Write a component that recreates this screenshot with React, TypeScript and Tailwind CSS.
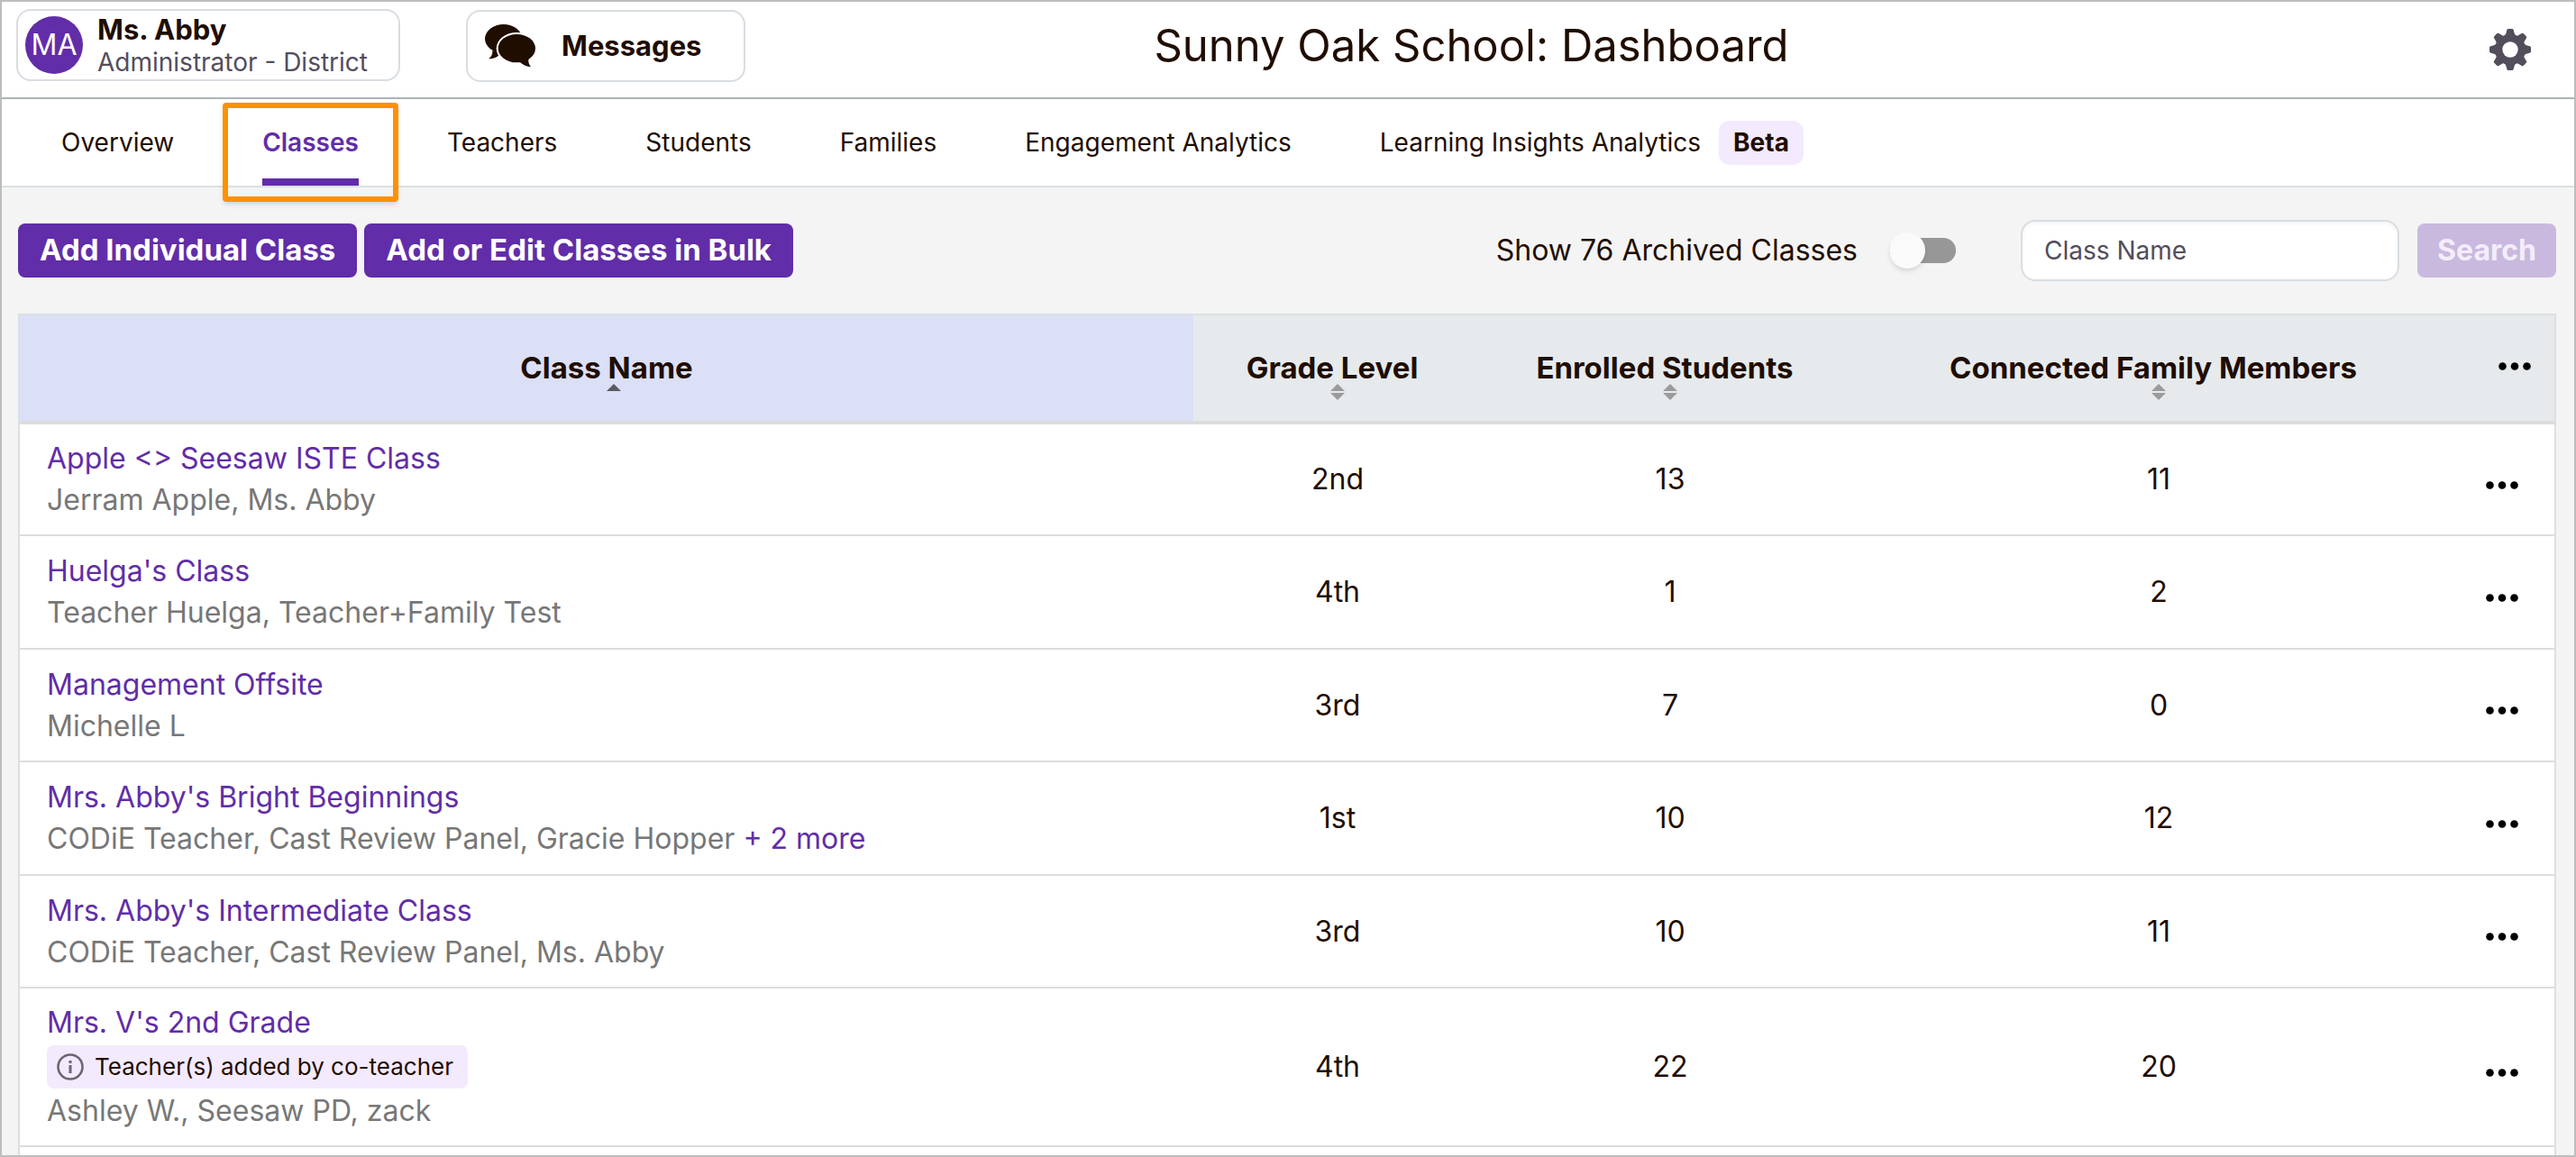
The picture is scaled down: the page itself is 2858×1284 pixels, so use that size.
import React, {useState} from "react";

type ClassRow = {
    name: string;
    teachers: string;
    more?: string;
    notice?: string;
    grade: string;
    students: number;
    family: number;
};

const TABS = ["Overview", "Classes", "Teachers", "Students", "Families", "Engagement Analytics"];

const CLASSES: ClassRow[] = [
    {name: "Apple <> Seesaw ISTE Class", teachers: "Jerram Apple, Ms. Abby", grade: "2nd", students: 13, family: 11},
    {name: "Huelga's Class", teachers: "Teacher Huelga, Teacher+Family Test", grade: "4th", students: 1, family: 2},
    {name: "Management Offsite", teachers: "Michelle L", grade: "3rd", students: 7, family: 0},
    {
        name: "Mrs. Abby's Bright Beginnings",
        teachers: "CODiE Teacher, Cast Review Panel, Gracie Hopper",
        more: "+ 2 more",
        grade: "1st",
        students: 10,
        family: 12,
    },
    {
        name: "Mrs. Abby's Intermediate Class",
        teachers: "CODiE Teacher, Cast Review Panel, Ms. Abby",
        grade: "3rd",
        students: 10,
        family: 11,
    },
    {
        name: "Mrs. V's 2nd Grade",
        teachers: "Ashley W., Seesaw PD, zack",
        notice: "Teacher(s) added by co-teacher",
        grade: "4th",
        students: 22,
        family: 20,
    },
];

const ChatIcon = () => (
    <svg viewBox="54 91 171 144" className="w-[57px] h-12" aria-hidden="true">
        <g fill="#1f0d00">
            <ellipse cx="116" cy="139" rx="62" ry="48"/>
            <path d="M79 178 C80 190 76 199 67 205 C80 207 92 203 100 194 L108 184 Z"/>
        </g>
        <ellipse cx="160" cy="171" rx="68" ry="53" fill="#fff"/>
        <g fill="#1f0d00">
            <ellipse cx="160" cy="171" rx="62" ry="47"/>
            <path d="M170 216 C181 226 193 232 207 233 C200 225 197 215 200 203 Z"/>
        </g>
    </svg>
);

const GearIcon = () => (
    <svg viewBox="0 0 138 138" className="w-[46px] h-[46px]" aria-hidden="true">
        <g fill="#534d5c">
            <circle cx="69" cy="69" r="50"/>
            {[0, 45, 90, 135, 180, 225, 270, 315].map((angle) => (
                <path
                    key={angle}
                    transform={`rotate(${angle} 69 69)`}
                    d="M62 0 H76 Q79 0 80 4 L83 15 Q84 21 92 25 L69 40 L46 25 Q54 21 55 15 L58 4 Q59 0 62 0 Z"
                />
            ))}
        </g>
        <circle cx="69" cy="69" r="26" fill="#fff"/>
    </svg>
);

const InfoIcon = () => (
    <svg viewBox="0 0 30 30" className="w-[30px] h-[30px]" fill="none" stroke="#6b6670" aria-hidden="true">
        <circle cx="15" cy="15" r="13.5" strokeWidth="2.6"/>
        <path d="M15 13 V22 M15 8 V11" strokeWidth="3"/>
    </svg>
);

const Dots = () => (
    <svg viewBox="0 0 36 9" className="w-9 h-[9px]" aria-hidden="true">
        <circle cx="4.5" cy="4.5" r="4.3"/>
        <circle cx="18" cy="4.5" r="4.3"/>
        <circle cx="31.5" cy="4.5" r="4.3"/>
    </svg>
);

const SortIcon = ({active = false}: { active?: boolean }) => (
    <svg viewBox="0 0 16 18" className="w-4 h-[18px]" aria-hidden="true">
        <path d="M8 0 L16 8 H0 Z" fill={active ? "#5a5a62" : "#9b9b9b"}/>
        {!active && <path d="M0 10 H16 L8 18 Z" fill="#9b9b9b"/>}
    </svg>
);

const SortHeader = ({label}: { label: string }) => (
    <th className="p-0 pt-4 font-bold" scope="col">
        <button className="w-full flex flex-col items-center font-bold">
            <span className="leading-9 pr-3">{label}</span>
            <SortIcon/>
        </button>
    </th>
);

const Header = () => (
    <header className="h-[108px] shrink-0 bg-white border-b-2 border-[#abb4b1] flex items-start pl-4 pr-12 pt-2">
        <button
            className="w-[426px] h-20 border-2 border-[#d8dde3] rounded-2xl flex items-center gap-4 pl-2 text-left">
            <span
                className="w-16 h-16 rounded-full bg-[#612da8] text-white text-[32px] flex items-center justify-center">
                MA
            </span>
            <span className="flex flex-col pt-0.5">
                <span className="text-[31px] leading-9 font-bold">Ms. Abby</span>
                <span className="text-[28px] leading-9 text-[#534d5c]">Administrator - District</span>
            </span>
        </button>
        <button
            className="w-[310px] h-20 mt-px ml-[73px] border-2 border-[#d8dde3] rounded-2xl flex items-center gap-7 pl-[19px] text-[31px] font-bold">
            <ChatIcon/>
            Messages
        </button>
        <h1 className="flex-1 text-center text-[49px] leading-[82px]">Sunny Oak School: Dashboard</h1>
        <div className="w-[370px] pt-[22px] flex justify-end">
            <button aria-label="Settings">
                <GearIcon/>
            </button>
        </div>
    </header>
);

const Nav = () => (
    <nav className="h-[98px] shrink-0 bg-white border-b-2 border-[#dae0e5] flex gap-[98px] pl-[66px] text-[28px]">
        {TABS.map((tab) => (
            <a
                key={tab}
                href="#"
                className={tab === "Classes"
                    ? "relative leading-[96px] font-semibold text-[#612da8] border-b-8 border-[#612da8] h-24"
                    : "leading-[96px]"}
            >
                {tab}
                {tab === "Classes" && (
                    <span
                        className="absolute -left-11 -right-11 top-1 h-[110px] border-[6px] border-[#ff9100] rounded-sm shadow-md"/>
                )}
            </a>
        ))}
        <a href="#" className="flex items-center gap-5 leading-[96px]">
            Learning Insights Analytics
            <span className="bg-[#f3eafe] rounded-xl px-4 h-[49px] leading-[49px] font-bold">Beta</span>
        </a>
    </nav>
);

const Toolbar = () => {
    const [archived, setArchived] = useState(false);

    return (
        <div className="flex items-center pt-9 pb-9 text-[32px]">
            <button className="h-[60px] px-6 rounded-lg bg-[#612da8] text-white text-[33px] font-bold">
                Add Individual Class
            </button>
            <button className="h-[60px] px-6 ml-2 rounded-lg bg-[#612da8] text-white text-[33px] font-bold">
                Add or Edit Classes in Bulk
            </button>
            <label className="ml-auto flex items-center gap-[35px]">
                Show 76 Archived Classes
                <input
                    type="checkbox"
                    checked={archived}
                    onChange={() => setArchived(!archived)}
                    className="appearance-none w-[74px] h-7 rounded-full bg-[#979797] flex items-center before:w-10 before:h-10 before:rounded-full before:bg-[#fafafa] before:shadow-md checked:justify-end"
                />
            </label>
            <input
                type="text"
                aria-label="Class Name"
                placeholder="Class Name"
                className="w-[420px] h-[68px] ml-[72px] px-6 bg-white border-2 border-[#d8dde3] rounded-2xl text-[28px] placeholder:text-[#534d5c] inset-shadow-sm"
            />
            <button className="h-[60px] w-[154px] ml-5 rounded-lg bg-[#c9b9df] text-[#f3edfa] font-bold">
                Search
            </button>
        </div>
    );
};

const ClassTable = () => (
    <div className="flex-1 bg-white border-2 border-b-0 border-[#dae0e5]">
        <table className="w-full table-fixed text-[32px]">
            <colgroup>
                <col/>
                <col className="w-80"/>
                <col className="w-[418px]"/>
                <col className="w-[666px]"/>
                <col className="w-[106px]"/>
            </colgroup>
            <thead className="text-[33px]">
                <tr className="h-[119px] bg-[#e6eaed] border-b-4 border-[#dddddd]">
                    <th className="p-0 pt-4 font-bold bg-[#dbe0f6]" scope="col" aria-sort="ascending">
                        <button className="w-full flex flex-col items-center font-bold">
                            <span className="leading-9">Class Name</span>
                            <span className="pl-4 flex"><SortIcon active/></span>
                        </button>
                    </th>
                    <SortHeader label="Grade Level"/>
                    <SortHeader label="Enrolled Students"/>
                    <SortHeader label="Connected Family Members"/>
                    <th className="p-0 pb-1">
                        <button aria-label="Table options" className="w-full h-9 flex items-center justify-end pr-[26px]">
                            <Dots/>
                        </button>
                    </th>
                </tr>
            </thead>
            <tbody>
                {CLASSES.map((row) => (
                    <tr key={row.name} className="h-[125px] even:h-[126px] border-b-2 border-[#dddddd] text-center">
                        <td className="py-[15px] pl-[30px] text-left leading-[46px]">
                            <a href="#" className="block text-[#612da8]">{row.name}</a>
                            {row.notice && (
                                <div
                                    className="w-fit h-12 my-0.5 pl-[11px] pr-4 flex items-center gap-3 bg-[#f3eafe] rounded-lg text-[26px]">
                                    <InfoIcon/>
                                    {row.notice}
                                </div>
                            )}
                            <div className="text-[#777777]">
                                {row.teachers}
                                {row.more && <a href="#" className="text-[#612da8]"> {row.more}</a>}
                            </div>
                        </td>
                        <td>{row.grade}</td>
                        <td>{row.students}</td>
                        <td>{row.family}</td>
                        <td>
                            <button aria-label={`Options for ${row.name}`}
                                    className="w-full h-9 pt-3 flex items-center justify-end pr-10">
                                <Dots/>
                            </button>
                        </td>
                    </tr>
                ))}
            </tbody>
        </table>
    </div>
);

const App: React.FC = () => {
    return (
        <div
            className="h-screen overflow-hidden flex flex-col border-2 border-[#bdbdbd] bg-[#f4f4f4] text-[#1f0d00] font-['Inter',sans-serif]">
            <Header/>
            <Nav/>
            <main className="flex-1 flex flex-col pl-[18px] pr-5">
                <Toolbar/>
                <ClassTable/>
            </main>
        </div>
    );
};

export default App;
